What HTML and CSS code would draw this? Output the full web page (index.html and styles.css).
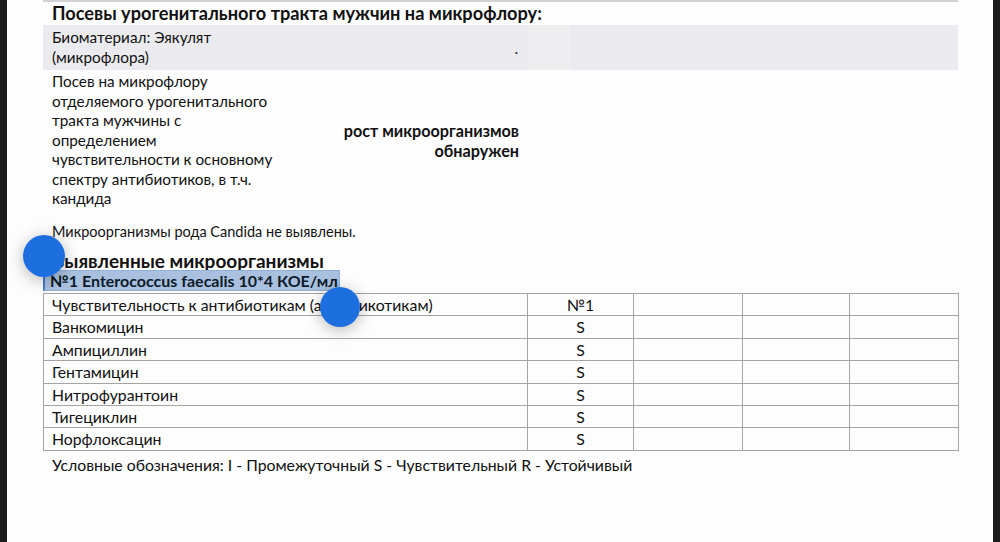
FILE: index.html
```html
<!DOCTYPE html>
<html lang="ru">
<head>
<meta charset="utf-8">
<link rel="stylesheet" href="styles.css">
</head>
<body>
<div class="page">
  <div class="rule"></div>
  <h1 class="title">Посевы урогенитального тракта мужчин на микрофлору:</h1>
  <div class="row bio">
    <div class="cell">Биоматериал: Эякулят (микрофлора)</div>
    <div class="cell right mid dot">.</div>
    <div class="cell stripe"></div>
  </div>
  <div class="row culture">
    <div class="cell">Посев на микрофлору отделяемого урогенитального тракта мужчины с определением чувствительности к основному спектру антибиотиков, в т.ч. кандида</div>
    <div class="cell right bold mid">рост микроорганизмов обнаружен</div>
    <div class="cell"></div>
  </div>
  <p class="note">Микроорганизмы рода Candida не выявлены.</p>
  <h2 class="subtitle">Выявленные микроорганизмы</h2>
  <div class="selected">№1 Enterococcus faecalis 10*4 КОЕ/мл</div>
  <table class="abx">
    <colgroup>
      <col class="c1"><col class="c2"><col class="c3"><col class="c4"><col class="c5">
    </colgroup>
    <tr><td>Чувствительность к антибиотикам (антимикотикам)</td><td class="ctr">№1</td><td></td><td></td><td></td></tr>
    <tr><td>Ванкомицин</td><td class="ctr">S</td><td></td><td></td><td></td></tr>
    <tr><td>Ампициллин</td><td class="ctr">S</td><td></td><td></td><td></td></tr>
    <tr><td>Гентамицин</td><td class="ctr">S</td><td></td><td></td><td></td></tr>
    <tr><td>Нитрофурантоин</td><td class="ctr">S</td><td></td><td></td><td></td></tr>
    <tr><td>Тигециклин</td><td class="ctr">S</td><td></td><td></td><td></td></tr>
    <tr><td>Норфлоксацин</td><td class="ctr">S</td><td></td><td></td><td></td></tr>
  </table>
  <p class="legend">Условные обозначения: I - Промежуточный S - Чувствительный R - Устойчивый</p>
  <div class="handle h1"></div>
  <div class="handle h2"></div>
</div>
</body>
</html>
```
FILE: styles.css
```css
html, body {
  margin: 0;
  padding: 0;
  background: #1c1c1c;
}
body {
  width: 1000px;
  height: 542px;
  overflow: hidden;
  font-family: Lato, "Noto Sans", sans-serif;
  color: #111;
}
.page {
  position: relative;
  margin: 0 7px;
  height: 542px;
  background: #fdfdfd;
  padding: 0 35px 0 36px;
  box-sizing: border-box;
  overflow: hidden;
}
.rule {
  height: 2px;
  background: #d2d2d4;
}
.title {
  margin: 0;
  padding-left: 9px;
  font-size: 18.2px;
  font-weight: 700;
  line-height: 23px;
}
.row {
  display: grid;
  grid-template-columns: 240px 245px 1fr;
}
.bio {
  background: #ebebef;
  height: 45px;
}
.cell {
  padding: 3px 9px;
  font-size: 15.3px;
  line-height: 19.5px;
}
.bio .cell:first-child {
  padding-right: 30px;
}
.dot {
  padding-right: 10px;
  padding-top: 6px;
}
.stripe {
  background: linear-gradient(90deg, #eeeef1 0, #eeeef1 42px, #ebebef 42px);
}
.culture .cell:first-child {
  padding-top: 2px;
  padding-right: 4px;
}
.right { text-align: right; }
.bold { font-weight: 700; font-size: 16.2px; }
.mid { align-self: center; }
.note {
  margin: 10px 0 0;
  padding-left: 9px;
  font-size: 14.5px;
  line-height: 19.5px;
}
.subtitle {
  margin: 11px 0 0;
  padding-left: 9px;
  font-size: 19px;
  font-weight: 700;
  line-height: 18px;
}
.selected {
  display: inline-block;
  box-sizing: border-box;
  width: 297px;
  height: 21px;
  padding-left: 5px;
  background: #a9c1de;
  border: 1px solid #8fb0d8;
  border-left: 2px solid #3d7ad6;
  font-size: 16px;
  font-weight: 700;
  line-height: 19px;
  color: #0d1a2a;
  white-space: nowrap;
  vertical-align: top;
}
.abx {
  margin-top: 2px;
  width: 915px;
  border-collapse: collapse;
  table-layout: fixed;
  font-size: 15.8px;
}
.c1 { width: 484px; }
.c2 { width: 106px; }
.c3 { width: 109px; }
.c4 { width: 107px; }
.c5 { width: 109px; }
.abx td {
  border: 1px solid #a4a4a4;
  padding: 0 8px;
  line-height: 21.4px;
  white-space: nowrap;
  overflow: hidden;
}
.abx td.ctr { text-align: center; }
.legend {
  margin: 4px 0 0;
  padding-left: 9px;
  font-size: 15.8px;
  line-height: 20px;
}
.handle {
  position: absolute;
  border-radius: 50%;
  background: #1d6fe0;
  box-shadow: 0 3px 16px rgba(0, 0, 0, 0.28);
}
.h1 {
  left: 16px;
  top: 235px;
  width: 42px;
  height: 42px;
}
.h2 {
  left: 313px;
  top: 287px;
  width: 40px;
  height: 40px;
}
```
